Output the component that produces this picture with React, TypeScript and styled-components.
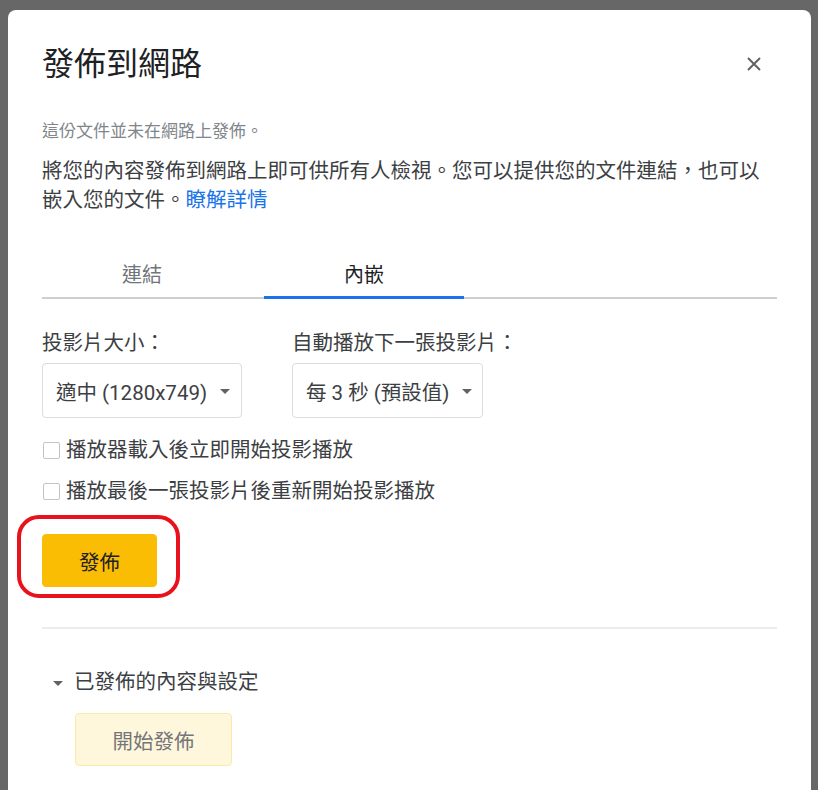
import React from "react"
import styled, { createGlobalStyle } from "styled-components"

const GlobalStyle = createGlobalStyle`
	html, body {
		margin: 0;
		padding: 0;
		background: #676767;
		overflow: hidden;
	}
	body {
		font-family: Roboto, "Noto Sans CJK TC", sans-serif;
		color: #202124;
	}
`

const Page = styled.div`
	height: 790px;
	padding: 10px 7px 0 8px;
	box-sizing: border-box;
`

const Dialog = styled.div`
	background: #fff;
	border-radius: 8px 8px 0 0;
	padding: 34px 34px 0 34px;
	height: 800px;
	box-sizing: border-box;
	display: flex;
	flex-direction: column;
	align-items: flex-start;
`

const Header = styled.div`
	align-self: stretch;
	display: flex;
	justify-content: space-between;
	align-items: center;
`

const Title = styled.h1`
	margin: 0;
	font-size: 32px;
	font-weight: 400;
	line-height: 40px;
	color: #202124;
`

const CloseBtn = styled.div`
	width: 24px;
	height: 24px;
	margin-right: 11px;
	display: grid;
	place-items: center;
	cursor: pointer;
	& svg {
		display: block;
	}
`

const Subtitle = styled.div`
	margin-top: 35px;
	font-size: 17px;
	line-height: 24px;
	color: #80868b;
`

const Para = styled.p`
	margin: 14px 0 0 0;
	font-size: 20.5px;
	line-height: 29px;
	color: #3c4043;
	width: 735px;
`

const Link = styled.a`
	color: #1a73e8;
	text-decoration: none;
`

const TabBar = styled.div`
	align-self: stretch;
	margin-top: 46px;
	display: flex;
	gap: 22px;
	border-bottom: 2px solid #cfcfcf;
`

const Tab = styled.div<{ $active?: boolean }>`
	width: 200px;
	height: 35px;
	line-height: 28px;
	text-align: center;
	font-size: 20px;
	color: ${(p) => (p.$active ? "#202124" : "#70757a")};
	border-bottom: 3px solid ${(p) => (p.$active ? "#1a73e8" : "transparent")};
	margin-bottom: -2px;
`

const FieldRow = styled.div`
	margin-top: 30px;
	display: flex;
	gap: 50px;
`

const Field = styled.div`
	display: flex;
	flex-direction: column;
	gap: 6px;
`

const Label = styled.div`
	font-size: 20.5px;
	line-height: 28px;
	color: #3c4043;
	white-space: nowrap;
`

const Select = styled.div<{ $width: number }>`
	width: ${(p) => p.$width}px;
	height: 55px;
	box-sizing: border-box;
	border: 1px solid #dadce0;
	border-radius: 4px;
	display: flex;
	align-items: center;
	gap: 13px;
	padding: 0 13px;
	font-size: 20.5px;
	color: #3c4043;
	white-space: nowrap;
`

const Caret = styled.span`
	width: 0;
	height: 0;
	border-left: 5px solid transparent;
	border-right: 5px solid transparent;
	border-top: 5px solid #5f6368;
	margin-top: 2px;
`

const CheckRow = styled.label<{ $first?: boolean }>`
	margin-top: ${(p) => (p.$first ? "18px" : "13px")};
	display: flex;
	align-items: center;
	gap: 6px;
	font-size: 20.5px;
	line-height: 28px;
	color: #3c4043;
`

const Box = styled.span`
	width: 17px;
	height: 17px;
	margin-left: 1px;
	box-sizing: border-box;
	border: 1.5px solid #c4c4c4;
	border-radius: 2px;
`

const Highlight = styled.div`
	position: relative;
	margin-top: 29px;
	&::after {
		content: "";
		position: absolute;
		left: -25px;
		top: -19px;
		width: 163px;
		height: 83px;
		box-sizing: border-box;
		border: 4px solid #e8121c;
		border-radius: 22px;
		pointer-events: none;
	}
`

const Button = styled.button<{ $disabled?: boolean }>`
	width: ${(p) => (p.$disabled ? "157px" : "115px")};
	height: 53px;
	border-radius: 4px;
	border: 1px solid ${(p) => (p.$disabled ? "#fbe9a8" : "#fbbc04")};
	background: ${(p) => (p.$disabled ? "#fef7db" : "#fbbc04")};
	color: ${(p) => (p.$disabled ? "#75757a" : "#202124")};
	font-family: inherit;
	font-size: 20.5px;
	padding: 0;
	cursor: pointer;
`

const Divider = styled.div`
	align-self: stretch;
	margin-top: 40px;
	height: 2px;
	background: #ececec;
`

const SectionHead = styled.div`
	margin-top: 39px;
	display: flex;
	align-items: center;
	gap: 11px;
	padding-left: 11px;
	font-size: 20.5px;
	line-height: 28px;
	color: #3c4043;
`

const Indent = styled.div`
	margin-top: 17px;
	padding-left: 33px;
`

export default function App() {
	return (
		<>
			<GlobalStyle />
			<Page>
				<Dialog>
					<Header>
						<Title>發佈到網路</Title>
						<CloseBtn>
							<svg width="16" height="16" viewBox="0 0 16 16">
								<path d="M2 2L14 14M14 2L2 14" stroke="#5f6368" strokeWidth="2" />
							</svg>
						</CloseBtn>
					</Header>
					<Subtitle>這份文件並未在網路上發佈。</Subtitle>
					<Para>
						將您的內容發佈到網路上即可供所有人檢視。您可以提供您的文件連結，也可以嵌入您的文件。
						<Link href="#">瞭解詳情</Link>
					</Para>
					<TabBar>
						<Tab>連結</Tab>
						<Tab $active>內嵌</Tab>
					</TabBar>
					<FieldRow>
						<Field>
							<Label>投影片大小：</Label>
							<Select $width={200}>
								適中 (1280x749) <Caret />
							</Select>
						</Field>
						<Field>
							<Label>自動播放下一張投影片：</Label>
							<Select $width={191}>
								每 3 秒 (預設值) <Caret />
							</Select>
						</Field>
					</FieldRow>
					<CheckRow $first>
						<Box />
						播放器載入後立即開始投影播放
					</CheckRow>
					<CheckRow>
						<Box />
						播放最後一張投影片後重新開始投影播放
					</CheckRow>
					<Highlight>
						<Button>發佈</Button>
					</Highlight>
					<Divider />
					<SectionHead>
						<Caret />
						已發佈的內容與設定
					</SectionHead>
					<Indent>
						<Button $disabled>開始發佈</Button>
					</Indent>
				</Dialog>
			</Page>
		</>
	)
}
